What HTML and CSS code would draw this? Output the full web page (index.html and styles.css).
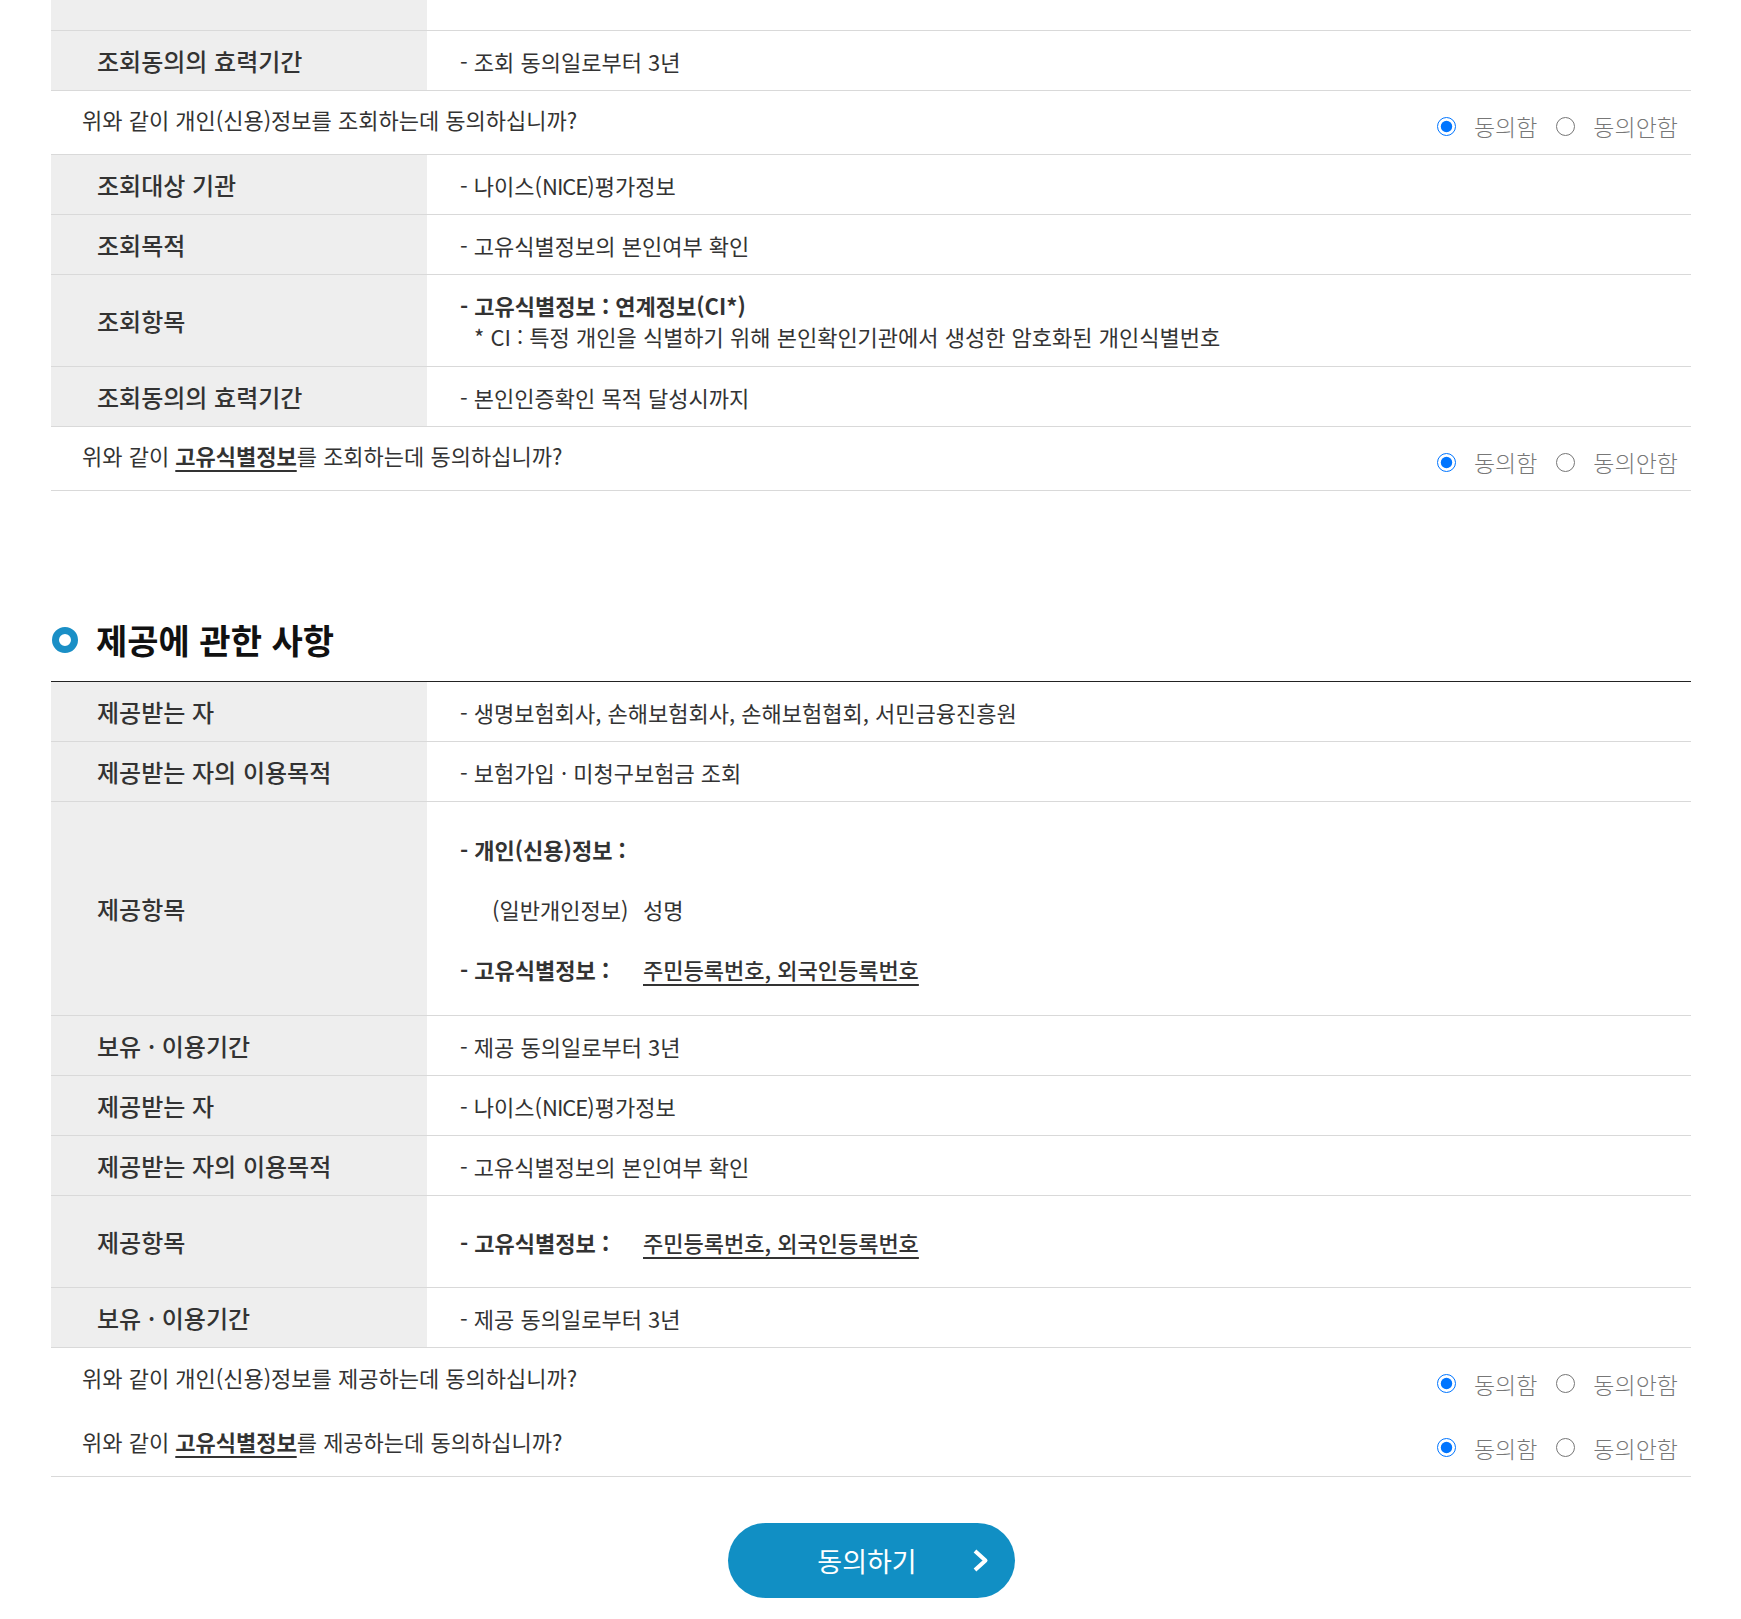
FILE: index.html
```html
<!DOCTYPE html>
<html lang="ko">
<head>
    <meta charset="UTF-8">
    <meta name="viewport" content="width=device-width, initial-scale=1.0">
    <title>개인(신용)정보 조회 및 제공 동의</title>
    <link rel="stylesheet" href="styles.css">
</head>
<body>
    <div class="agree-wrap">

        <div class="info-table">
            <div class="info-row cut">
                <div class="info-th"></div>
                <div class="info-td"></div>
            </div>
            <div class="info-row">
                <div class="info-th">조회동의의 효력기간</div>
                <div class="info-td">- 조회 동의일로부터 3년</div>
            </div>
        </div>
        <div class="ask-row">
            <p class="ask-text">위와 같이 개인(신용)정보를 조회하는데 동의하십니까?</p>
            <div class="ask-radios">
                <label><input type="radio" name="q1" checked>동의함</label>
                <label><input type="radio" name="q1">동의안함</label>
            </div>
        </div>

        <div class="info-table">
            <div class="info-row">
                <div class="info-th">조회대상 기관</div>
                <div class="info-td">- 나이스(<span class="latin">NICE</span>)평가정보</div>
            </div>
            <div class="info-row">
                <div class="info-th">조회목적</div>
                <div class="info-td">- 고유식별정보의 본인여부 확인</div>
            </div>
            <div class="info-row tall">
                <div class="info-th">조회항목</div>
                <div class="info-td">
                    <div class="td-lines">
                        <strong>- 고유식별정보 : 연계정보(CI*)</strong>
                        <span class="note">* CI : 특정 개인을 식별하기 위해 본인확인기관에서 생성한 암호화된 개인식별번호</span>
                    </div>
                </div>
            </div>
            <div class="info-row">
                <div class="info-th">조회동의의 효력기간</div>
                <div class="info-td">- 본인인증확인 목적 달성시까지</div>
            </div>
        </div>
        <div class="ask-row">
            <p class="ask-text">위와 같이 <u>고유식별정보</u>를 조회하는데 동의하십니까?</p>
            <div class="ask-radios">
                <label><input type="radio" name="q2" checked>동의함</label>
                <label><input type="radio" name="q2">동의안함</label>
            </div>
        </div>

        <h3 class="sec-title"><span class="sec-dot"></span>제공에 관한 사항</h3>

        <div class="info-table">
            <div class="info-row">
                <div class="info-th">제공받는 자</div>
                <div class="info-td">- 생명보험회사, 손해보험회사, 손해보험협회, 서민금융진흥원</div>
            </div>
            <div class="info-row">
                <div class="info-th">제공받는 자의 이용목적</div>
                <div class="info-td">- 보험가입 · 미청구보험금 조회</div>
            </div>
            <div class="info-row big">
                <div class="info-th">제공항목</div>
                <div class="info-td">
                    <div class="item-list">
                        <p><strong>- 개인(신용)정보 :</strong></p>
                        <p><span class="item-sub">(일반개인정보)</span>성명</p>
                        <p><strong class="item-key">- 고유식별정보 :</strong><u>주민등록번호, 외국인등록번호</u></p>
                    </div>
                </div>
            </div>
            <div class="info-row">
                <div class="info-th">보유 · 이용기간</div>
                <div class="info-td">- 제공 동의일로부터 3년</div>
            </div>
            <div class="info-row">
                <div class="info-th">제공받는 자</div>
                <div class="info-td">- 나이스(<span class="latin">NICE</span>)평가정보</div>
            </div>
            <div class="info-row">
                <div class="info-th">제공받는 자의 이용목적</div>
                <div class="info-td">- 고유식별정보의 본인여부 확인</div>
            </div>
            <div class="info-row tall">
                <div class="info-th">제공항목</div>
                <div class="info-td">
                    <p><strong class="item-key">- 고유식별정보 :</strong><u>주민등록번호, 외국인등록번호</u></p>
                </div>
            </div>
            <div class="info-row">
                <div class="info-th">보유 · 이용기간</div>
                <div class="info-td">- 제공 동의일로부터 3년</div>
            </div>
        </div>
        <div class="ask-group">
            <div class="ask-row">
                <p class="ask-text">위와 같이 개인(신용)정보를 제공하는데 동의하십니까?</p>
                <div class="ask-radios">
                    <label><input type="radio" name="q3" checked>동의함</label>
                    <label><input type="radio" name="q3">동의안함</label>
                </div>
            </div>
            <div class="ask-row">
                <p class="ask-text">위와 같이 <u>고유식별정보</u>를 제공하는데 동의하십니까?</p>
                <div class="ask-radios">
                    <label><input type="radio" name="q4" checked>동의함</label>
                    <label><input type="radio" name="q4">동의안함</label>
                </div>
            </div>
        </div>

        <div class="btn-area">
            <button type="button" class="agree-btn">
                동의하기
                <svg class="btn-arrow" width="17" height="25" viewBox="0 0 17 25">
                    <path d="M3 3 L13.5 12.5 L3 22" fill="none" stroke="#fff" stroke-width="4" stroke-linejoin="round"/>
                </svg>
            </button>
        </div>

    </div>
</body>
</html>
```

FILE: styles.css
```css
body {
    margin: 0;
    padding: 0;
    background: #fff;
    color: #333;
    font-family: 'Noto Sans CJK KR', 'Noto Sans', sans-serif;
}
p {
    margin: 0;
}
.agree-wrap {
    width: 1640px;
    margin: 0 0 0 51px;
}
.info-row {
    display: grid;
    grid-template-columns: 376px 1fr;
    min-height: 59px;
    border-bottom: 1px solid #d9d9d9;
}
.info-row.cut {
    min-height: 30px;
}
.info-row.tall {
    min-height: 91px;
}
.info-row.big {
    min-height: 213px;
}
.info-th {
    display: flex;
    align-items: center;
    padding-left: 46px;
    background: #eeeeee;
    font-size: 24px;
    font-weight: 500;
    color: #333;
}
.info-td {
    display: flex;
    align-items: center;
    padding-left: 33px;
    font-size: 22px;
    color: #333;
}
.latin {
    letter-spacing: -1px;
}
.td-lines {
    display: flex;
    flex-direction: column;
    line-height: 31px;
}
.td-lines .note {
    padding-left: 14px;
}
.item-list p {
    line-height: 60px;
}
.item-sub {
    display: inline-block;
    width: 151px;
    padding-left: 32px;
}
.item-key {
    display: inline-block;
    width: 183px;
}
.info-td u,
.ask-text u {
    text-decoration-thickness: 2px;
    text-underline-offset: 5px;
    font-weight: 700;
}
.info-td u {
    font-weight: 500;
}
.ask-row {
    display: flex;
    justify-content: space-between;
    align-items: center;
    height: 63px;
    padding: 0 13px 0 31px;
    border-bottom: 1px solid #d9d9d9;
}
.ask-group .ask-row {
    height: 64px;
    border-bottom: none;
}
.ask-group {
    border-bottom: 1px solid #d9d9d9;
}
.ask-text {
    font-size: 22px;
    color: #333;
    margin-top: -7px;
}
.ask-radios {
    display: flex;
    gap: 19px;
    margin-top: 7px;
    font-size: 23px;
    font-weight: 300;
    color: #777;
}
.ask-radios label {
    display: flex;
    align-items: center;
    gap: 18px;
}
.ask-radios input {
    width: 19px;
    height: 19px;
    margin: 0;
}
.sec-title {
    display: flex;
    align-items: center;
    gap: 18px;
    margin: 129px 0 0;
    padding: 0 0 21px 1px;
    border-bottom: 1px solid #222;
    font-size: 34px;
    line-height: 40px;
    font-weight: 700;
    color: #111;
}
.sec-dot {
    width: 26px;
    height: 26px;
    box-sizing: border-box;
    border: 7px solid #1a8fc6;
    border-radius: 50%;
}
.btn-area {
    display: flex;
    justify-content: center;
    padding-top: 46px;
}
.agree-btn {
    position: relative;
    width: 287px;
    height: 75px;
    padding: 0 8px 0 0;
    border: none;
    border-radius: 38px;
    background: #118fc4;
    color: #fff;
    font-family: 'Noto Sans CJK KR', 'Noto Sans', sans-serif;
    font-size: 27px;
    cursor: pointer;
}
.btn-arrow {
    position: absolute;
    right: 26px;
    top: 25px;
}
```
